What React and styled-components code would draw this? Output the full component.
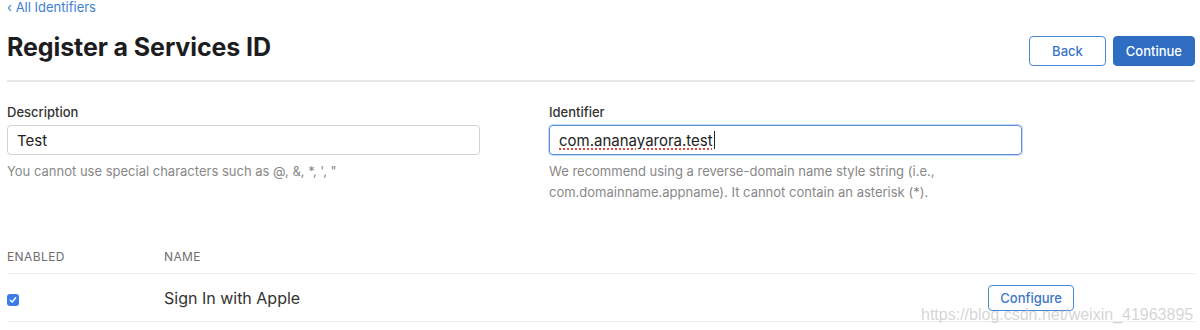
import React from "react";
import styled, { createGlobalStyle, css } from "styled-components";

const GlobalStyle = createGlobalStyle`
  html, body {
    margin: 0;
    padding: 0;
    background: #fff;
    font-family: Inter, "Liberation Sans", sans-serif;
    color: #333;
  }
`;

const Page = styled.div`
  position: relative;
  width: 1200px;
  height: 330px;
  overflow: hidden;
  padding: 0 5px 0 7px;
  box-sizing: border-box;
`;

const BackLink = styled.a`
  display: block;
  margin-top: -1px;
  font-size: 13px;
  line-height: 16px;
  color: #3f7fd3;
  text-decoration: none;
`;

const Header = styled.div`
  display: flex;
  justify-content: space-between;
  align-items: flex-start;
  margin-top: 17px;
`;

const Title = styled.h1`
  margin: 0;
  font-size: 25px;
  line-height: 30px;
  font-weight: 700;
  color: #1d1d1f;
  letter-spacing: -0.1px;
`;

const Actions = styled.div`
  display: flex;
  gap: 7px;
  margin-top: 4px;
`;

const Button = styled.button`
  height: 30px;
  padding: 0 ${({ $pad }) => $pad || 12}px;
  border-radius: 4px;
  font-family: inherit;
  font-size: 13px;
  font-weight: 500;
  cursor: pointer;
  box-sizing: border-box;
  ${({ $primary }) =>
    $primary
      ? css`
          background: #2e6dc2;
          border: 1px solid #2e6dc2;
          color: #fff;
        `
      : css`
          background: #fff;
          border: 1px solid #4a88d6;
          color: #3a76c8;
        `}
`;

const Divider = styled.div`
  height: 2px;
  background: #e7e7e7;
  margin-top: 14px;
`;

const FormGrid = styled.div`
  display: grid;
  grid-template-columns: 473px 473px;
  column-gap: 69px;
  margin-top: 22px;
`;

const Field = styled.div`
  display: flex;
  flex-direction: column;
`;

const Label = styled.label`
  font-size: 13px;
  line-height: 16px;
  font-weight: 500;
  color: #333;
`;

const Input = styled.div`
  margin-top: 5px;
  height: 30px;
  box-sizing: border-box;
  border-radius: 4px;
  padding: 0 9px;
  display: flex;
  align-items: center;
  font-size: 15px;
  color: #222;
  border: 1px solid #d3d3d3;
  ${({ $focused }) =>
    $focused &&
    css`
      border: 1px solid #5a8fdc;
      box-shadow: 0 0 0 1px rgba(90, 143, 220, 0.35);
    `}
`;

const Misspelled = styled.span`
  text-decoration: underline dotted #e0473f;
  text-decoration-thickness: 2px;
  text-underline-offset: 3px;
`;

const Caret = styled.span`
  display: inline-block;
  width: 1px;
  height: 18px;
  background: #222;
  margin-left: 1px;
`;

const Help = styled.p`
  margin: 6px 0 0;
  font-size: 13px;
  line-height: 21px;
  color: #888;
`;

const Table = styled.div`
  margin-top: 46px;
`;

const Row = styled.div`
  display: grid;
  grid-template-columns: 157px 1fr auto;
  align-items: center;
  padding-right: 121px;
  border-bottom: 1px solid #ececec;
  ${({ $head }) =>
    $head
      ? css`
          padding-bottom: 8px;
          font-size: 12px;
          line-height: 16px;
          color: #6e6e6e;
          letter-spacing: 0.4px;
          text-transform: uppercase;
        `
      : css`
          height: 47px;
          font-size: 16px;
          color: #333;
        `}
`;

const Check = styled.span`
  display: inline-flex;
  align-items: center;
  justify-content: center;
  width: 12px;
  height: 12px;
  border-radius: 3px;
  background: #3b7bea;
`;

const SmallButton = styled(Button)`
  height: 26px;
  padding: 0 11px;
  font-size: 13px;
`;

const Watermark = styled.div`
  position: absolute;
  left: 921px;
  top: 304px;
  white-space: nowrap;
  font-family: "Liberation Sans", sans-serif;
  font-size: 16px;
  line-height: 22px;
  color: rgba(200, 200, 200, 0.75);
  pointer-events: none;
`;

export default function App() {
  return (
    <>
      <GlobalStyle />
      <Page>
        <BackLink href="#">‹ All Identifiers</BackLink>
        <Header>
          <Title>Register a Services ID</Title>
          <Actions>
            <Button $pad={22}>Back</Button>
            <Button $primary $pad={12}>Continue</Button>
          </Actions>
        </Header>
        <Divider />
        <FormGrid>
          <Field>
            <Label>Description</Label>
            <Input>Test</Input>
            <Help>You cannot use special characters such as @, &amp;, *, ', "</Help>
          </Field>
          <Field>
            <Label>Identifier</Label>
            <Input $focused>
              <Misspelled>com.ananayarora.test</Misspelled>
              <Caret />
            </Input>
            <Help>
              We recommend using a reverse-domain name style string (i.e.,
              <br />
              com.domainname.appname). It cannot contain an asterisk (*).
            </Help>
          </Field>
        </FormGrid>
        <Table>
          <Row $head>
            <span>Enabled</span>
            <span>Name</span>
            <span />
          </Row>
          <Row>
            <span>
              <Check>
                <svg width="8" height="8" viewBox="0 0 8 8">
                  <path d="M1.3 4.2 L3.2 6 L6.7 1.8" fill="none" stroke="#fff" strokeWidth="1.4" strokeLinecap="round" strokeLinejoin="round" />
                </svg>
              </Check>
            </span>
            <span>Sign In with Apple</span>
            <SmallButton>Configure</SmallButton>
          </Row>
        </Table>
        <Watermark>https://blog.csdn.net/weixin_41963895</Watermark>
      </Page>
    </>
  );
}
